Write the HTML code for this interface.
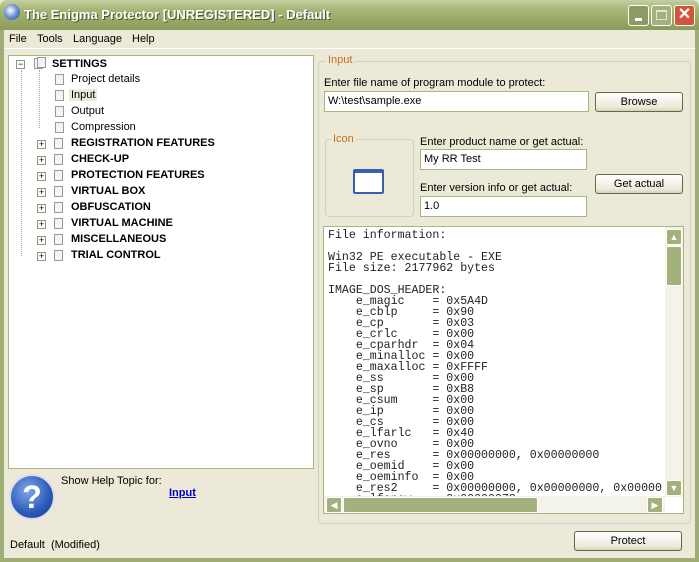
<!DOCTYPE html>
<html><head><meta charset="utf-8"><style>
*{margin:0;padding:0;box-sizing:border-box}
body{width:699px;height:562px;overflow:hidden;background:#ece9d8;font-family:Tahoma,"Liberation Sans",sans-serif;font-size:11px;color:#000;position:relative}
.a{position:absolute}
.title{left:0;top:0;width:699px;height:30px;background:linear-gradient(#c4cfa0,#a8b77a 30%,#96a765 70%,#8a9a5a);border-radius:7px 7px 0 0}
.frame{background:#9fae74}
.tb{color:#fff;font-weight:bold;font-size:13px;text-shadow:1px 1px #4a5530;left:24px;top:7px;font-family:"Liberation Sans",sans-serif}
.wb{top:5px;width:21px;height:21px;border:1px solid #fff;border-radius:3px}
.inp{background:#fff;border:1px solid #a5b97b;padding:3px 3px;font-size:11px}
.btn{border:1px solid #5f6c43;border-radius:3px;background:linear-gradient(#fff,#ece9d8 80%,#d6d0b8);text-align:center;line-height:18px;font-size:11px}
.grp{border:1px solid #d0d0bf;border-radius:4px}
.lg{color:#c66e12;background:#ece9d8;padding:0 2px}
.tr{left:71px;font-size:11px}
.b{font-weight:bold;font-family:"Liberation Sans",sans-serif;font-size:11px}
.pm{width:9px;height:9px;border:1px solid #8a9a7b;background:#fff;font-size:9px;line-height:7px;text-align:center;left:37px}
.ic{width:9px;height:11px;border:1px solid #999;background:#f4f4f4}
.mono{font-family:"Liberation Mono",monospace;font-size:11.6px;line-height:11px;white-space:pre;left:328px;top:229px;color:#222}
</style></head><body>
<div class="a title"></div>
<div class="a" style="left:4px;top:4px;width:16px;height:16px;border-radius:50%;background:radial-gradient(circle at 40% 40%,#fff,#6a8ed0 50%,#2b4a9a)"></div>
<div class="a tb">The Enigma Protector [UNREGISTERED] - Default</div>
<div class="a wb" style="left:628px;background:#8c9b62"><div class="a" style="left:6px;top:12px;width:7px;height:3px;background:#fff"></div></div>
<div class="a wb" style="left:651px;background:#a3b27c"><div class="a" style="left:4px;top:4px;width:11px;height:10px;border:1px solid #e0e6cc;border-top-width:2px"></div></div>
<div class="a wb" style="left:674px;background:#d0553a;color:#fff;font-size:16px;font-weight:bold;text-align:center;line-height:18px">✕</div>
<div class="a frame" style="left:0;top:30px;width:4px;height:532px"></div>
<div class="a frame" style="left:695px;top:30px;width:4px;height:532px"></div>
<div class="a frame" style="left:0;top:558px;width:699px;height:4px"></div>

<div class="a" style="left:9px;top:33px">File</div>
<div class="a" style="left:37px;top:33px">Tools</div>
<div class="a" style="left:73px;top:33px">Language</div>
<div class="a" style="left:132px;top:33px">Help</div>
<div class="a" style="left:4px;top:48px;width:691px;height:1px;background:#fff"></div>

<div class="a" style="left:8px;top:55px;width:306px;height:414px;background:#fff;border:1px solid #a5b97b"></div>
<div class="a" style="left:21px;top:70px;width:0;height:186px;border-left:1px dotted #aaa"></div>
<div class="a pm" style="left:16px;top:60px">−</div>
<div class="a ic" style="left:34px;top:58px"></div><div class="a ic" style="left:37px;top:57px"></div>
<div class="a b" style="left:52px;top:58px">SETTINGS</div>
<div class="a" style="left:39px;top:70px;height:58px;border-left:1px dotted #aaa"></div>
<div class="a ic" style="left:55px;top:74px"></div><div class="a tr" style="top:73px">Project details</div>
<div class="a ic" style="left:55px;top:90px"></div><div class="a tr" style="top:89px;background:#ece9d8;padding:0 2px;left:69px">Input</div>
<div class="a ic" style="left:55px;top:106px"></div><div class="a tr" style="top:105px">Output</div>
<div class="a ic" style="left:55px;top:122px"></div><div class="a tr" style="top:121px">Compression</div>
<div class="a pm" style="top:140px">+</div><div class="a ic" style="left:54px;top:138px"></div><div class="a tr b" style="top:137px">REGISTRATION FEATURES</div>
<div class="a pm" style="top:156px">+</div><div class="a ic" style="left:54px;top:154px"></div><div class="a tr b" style="top:153px">CHECK-UP</div>
<div class="a pm" style="top:172px">+</div><div class="a ic" style="left:54px;top:170px"></div><div class="a tr b" style="top:169px">PROTECTION FEATURES</div>
<div class="a pm" style="top:188px">+</div><div class="a ic" style="left:54px;top:186px"></div><div class="a tr b" style="top:185px">VIRTUAL BOX</div>
<div class="a pm" style="top:204px">+</div><div class="a ic" style="left:54px;top:202px"></div><div class="a tr b" style="top:201px">OBFUSCATION</div>
<div class="a pm" style="top:220px">+</div><div class="a ic" style="left:54px;top:218px"></div><div class="a tr b" style="top:217px">VIRTUAL MACHINE</div>
<div class="a pm" style="top:236px">+</div><div class="a ic" style="left:54px;top:234px"></div><div class="a tr b" style="top:233px">MISCELLANEOUS</div>
<div class="a pm" style="top:252px">+</div><div class="a ic" style="left:54px;top:250px"></div><div class="a tr b" style="top:249px">TRIAL CONTROL</div>

<div class="a" style="left:9px;top:474px;width:46px;height:46px;border-radius:50%;background:radial-gradient(circle at 40% 35%,#7fa8e8,#2a5ab8 60%,#1a3a88);border:2px solid #dde;color:#fff;font-size:32px;font-weight:bold;text-align:center;line-height:42px;font-family:'Liberation Sans'">?</div>
<div class="a" style="left:61px;top:475px">Show Help Topic for:</div>
<div class="a b" style="left:169px;top:487px;color:#00c;text-decoration:underline">Input</div>
<div class="a" style="left:10px;top:539px">Default &nbsp;(Modified)</div>

<div class="a grp" style="left:318px;top:61px;width:373px;height:463px"></div>
<div class="a lg" style="left:326px;top:54px">Input</div>
<div class="a" style="left:324px;top:77px">Enter file name of program module to protect:</div>
<div class="a inp" style="left:324px;top:91px;width:265px;height:21px">W:\test\sample.exe</div>
<div class="a btn" style="left:595px;top:92px;width:88px;height:20px">Browse</div>
<div class="a grp" style="left:325px;top:139px;width:89px;height:78px"></div>
<div class="a lg" style="left:331px;top:133px">Icon</div>
<div class="a" style="left:353px;top:169px;width:31px;height:25px;border:2px solid #3a5fb0;border-top-width:4px;border-radius:2px;background:#fff"></div>
<div class="a" style="left:420px;top:136px">Enter product name or get actual:</div>
<div class="a inp" style="left:420px;top:149px;width:167px;height:21px">My RR Test</div>
<div class="a btn" style="left:595px;top:174px;width:88px;height:20px">Get actual</div>
<div class="a" style="left:420px;top:182px">Enter version info or get actual:</div>
<div class="a inp" style="left:420px;top:196px;width:167px;height:21px">1.0</div>

<div class="a" style="left:323px;top:226px;width:361px;height:288px;background:#fff;border:1px solid #a5b97b;overflow:hidden">
<div class="a mono" style="left:4px;top:3px">File information:

Win32 PE executable - EXE
File size: 2177962 bytes

IMAGE_DOS_HEADER:
    e_magic    = 0x5A4D
    e_cblp     = 0x90
    e_cp       = 0x03
    e_crlc     = 0x00
    e_cparhdr  = 0x04
    e_minalloc = 0x00
    e_maxalloc = 0xFFFF
    e_ss       = 0x00
    e_sp       = 0xB8
    e_csum     = 0x00
    e_ip       = 0x00
    e_cs       = 0x00
    e_lfarlc   = 0x40
    e_ovno     = 0x00
    e_res      = 0x00000000, 0x00000000
    e_oemid    = 0x00
    e_oeminfo  = 0x00
    e_res2     = 0x00000000, 0x00000000, 0x00000
    e_lfanew   = 0x00000078</div>
<div class="a" style="left:341px;top:0;width:19px;height:270px;background:#f3f3ea"></div>
<div class="a" style="left:342px;top:2px;width:16px;height:16px;background:#a3b27c;border:1px solid #fff;border-radius:2px;color:#fff;font-size:9px;text-align:center;line-height:14px">▲</div>
<div class="a" style="left:342px;top:19px;width:16px;height:40px;background:#a3b27c;border:1px solid #fff;border-radius:2px"></div>
<div class="a" style="left:342px;top:253px;width:16px;height:16px;background:#a3b27c;border:1px solid #fff;border-radius:2px;color:#fff;font-size:9px;text-align:center;line-height:14px">▼</div>
<div class="a" style="left:0;top:269px;width:341px;height:18px;background:#f3f3ea"></div>
<div class="a" style="left:2px;top:270px;width:16px;height:16px;background:#a3b27c;border:1px solid #fff;border-radius:2px;color:#fff;font-size:9px;text-align:center;line-height:14px">◀</div>
<div class="a" style="left:19px;top:270px;width:195px;height:16px;background:#a3b27c;border:1px solid #fff;border-radius:2px"></div>
<div class="a" style="left:323px;top:270px;width:16px;height:16px;background:#a3b27c;border:1px solid #fff;border-radius:2px;color:#fff;font-size:9px;text-align:center;line-height:14px">▶</div>
</div>

<div class="a btn" style="left:574px;top:531px;width:108px;height:20px">Protect</div>
</body></html>
